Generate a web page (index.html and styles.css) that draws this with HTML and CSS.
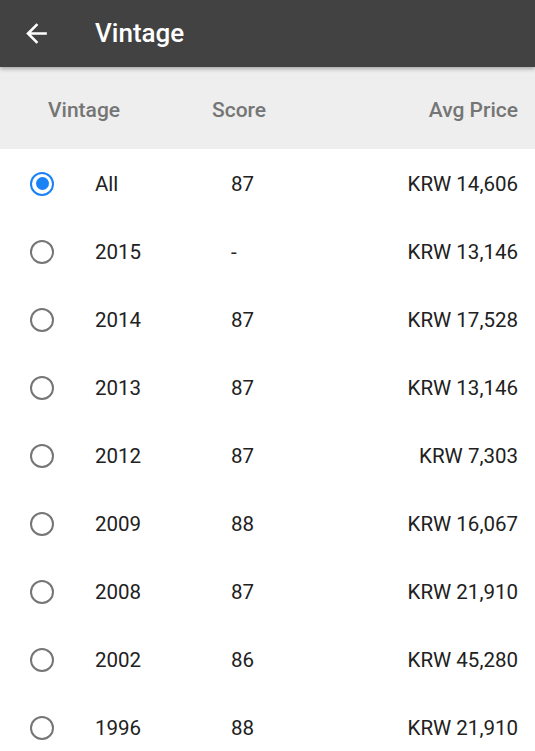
FILE: index.html
```html
<!DOCTYPE html>
<html lang="en">

<head>
    <meta charset="UTF-8">
    <meta name="viewport" content="width=device-width, initial-scale=1.0">
    <title>Vintage</title>
    <link rel="stylesheet" href="styles.css">
</head>

<body>
    <header class="app-bar">
        <svg class="back-icon" viewBox="0 0 24 24" width="31" height="31">
            <path d="M20 11H7.830l5.59-5.59L12 4l-8 8 8 8 1.41-1.41L7.83 13H20v-2z" fill="#ffffff"/>
        </svg>
        <h1 class="title">Vintage</h1>
    </header>

    <div class="table-head">
        <span>Vintage</span>
        <span>Score</span>
        <span class="price">Avg Price</span>
    </div>

    <ul class="vintage-list">
        <li class="row selected"><span class="radio"></span><span>All</span><span>87</span><span class="price">KRW 14,606</span></li>
        <li class="row"><span class="radio"></span><span>2015</span><span>-</span><span class="price">KRW 13,146</span></li>
        <li class="row"><span class="radio"></span><span>2014</span><span>87</span><span class="price">KRW 17,528</span></li>
        <li class="row"><span class="radio"></span><span>2013</span><span>87</span><span class="price">KRW 13,146</span></li>
        <li class="row"><span class="radio"></span><span>2012</span><span>87</span><span class="price">KRW 7,303</span></li>
        <li class="row"><span class="radio"></span><span>2009</span><span>88</span><span class="price">KRW 16,067</span></li>
        <li class="row"><span class="radio"></span><span>2008</span><span>87</span><span class="price">KRW 21,910</span></li>
        <li class="row"><span class="radio"></span><span>2002</span><span>86</span><span class="price">KRW 45,280</span></li>
        <li class="row"><span class="radio"></span><span>1996</span><span>88</span><span class="price">KRW 21,910</span></li>
    </ul>
</body>

</html>
```

FILE: styles.css
```css
body {
    margin: 0;
    font-family: Roboto, "Noto Sans", sans-serif;
    background-color: #ffffff;
    overflow: hidden;
}

/* App bar */
.app-bar {
    height: 67px;
    background-color: #424242;
    display: flex;
    align-items: center;
    padding-left: 21px;
    box-shadow: 0 2px 4px rgba(0, 0, 0, 0.3);
    position: relative;
}

.back-icon {
    display: block;
}

.title {
    margin: 0 0 1px 43px;
    color: #ffffff;
    font-size: 26px;
    font-weight: 500;
}

/* Column header */
.table-head {
    height: 79px;
    padding: 3px 17px 0 48px;
    background-color: #eeeeee;
    display: grid;
    grid-template-columns: 164px 1fr auto;
    align-items: center;
    color: #757575;
    font-size: 21px;
    font-weight: 500;
}

.price {
    text-align: right;
}

/* Rows */
.vintage-list {
    list-style: none;
    margin: 0;
    padding: 0;
}

.row {
    height: 68px;
    display: grid;
    grid-template-columns: 65px 136px 1fr auto;
    align-items: center;
    padding: 1px 17px 0 30px;
    box-sizing: border-box;
    color: #212121;
    font-size: 20.5px;
}

.radio {
    width: 20px;
    height: 20px;
    border: 2.5px solid #757575;
    border-radius: 50%;
    position: relative;
}

.selected .radio {
    border-color: #1a82f7;
}

.selected .radio::after {
    content: "";
    position: absolute;
    left: 3.5px;
    top: 3.5px;
    width: 13px;
    height: 13px;
    border-radius: 50%;
    background-color: #1a82f7;
}
```
